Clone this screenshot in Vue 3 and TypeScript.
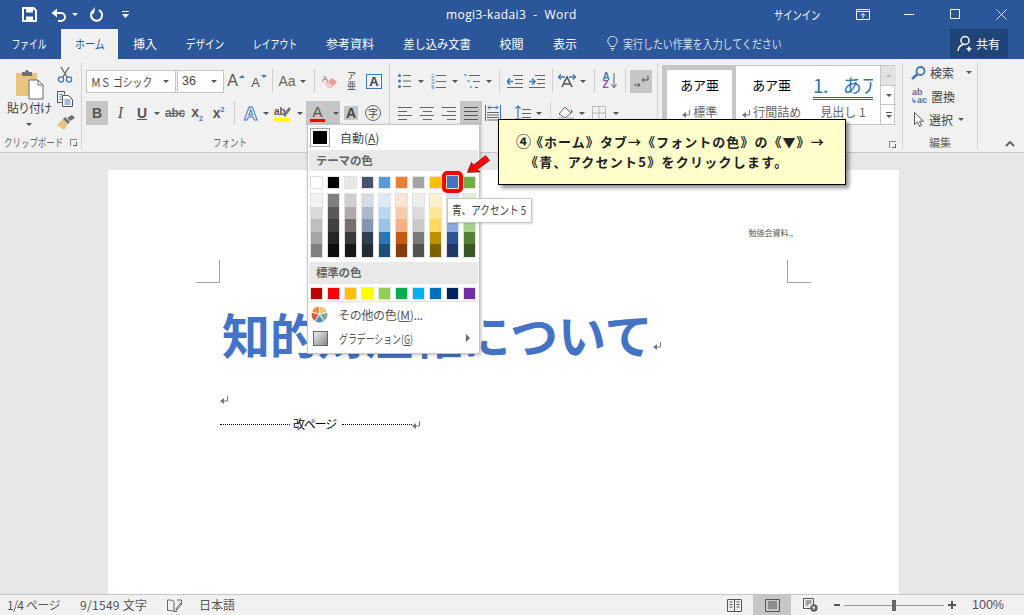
<template>
  <div class="word">
    <header class="titlebar">
      <div class="qat">
        <svg class="q-save" width="15" height="15" viewBox="0 0 15 15"><path d="M1 1h10.5L14 3.5V14H1z" fill="none" stroke="#fff" stroke-width="2"/><path d="M4 1h7v4.5H4zM4 9.5h7V14H4z" fill="#fff"/></svg>
        <svg class="q-undo" width="16" height="14" viewBox="0 0 16 14"><path d="M2.5 5H10a4 4 0 0 1 0 8H7" fill="none" stroke="#fff" stroke-width="2"/><path d="M6 .5v9L.5 5z" fill="#fff"/></svg>
        <span class="caret white q-c1"></span>
        <svg class="q-redo" width="15" height="15" viewBox="0 0 15 15"><path d="M5 3.2a5.6 5.6 0 1 0 5-.1" fill="none" stroke="#fff" stroke-width="2"/><path d="M5.5 0v7H1.5z" fill="#fff" transform="rotate(8 5 3)"/></svg>
        <svg class="q-more" width="7" height="7" viewBox="0 0 7 7"><path d="M0 0h7v1H0zM0 3h7L3.5 7z" fill="#fff"/></svg>
      </div>
      <div class="doc-title">mogi3-kadai3&nbsp; -&nbsp; Word</div>
      <div class="signin"><span>サインイン</span></div>
      <div class="winctl">
        <svg width="14" height="11" viewBox="0 0 14 11"><path d="M.5.5h13v10H.5zM.5 2.5h13M7 9V4.5M5 6.5l2-2 2 2" fill="none" stroke="#fff"/></svg>
        <svg width="11" height="11" viewBox="0 0 11 11"><path d="M0 5.5h10" stroke="#fff"/></svg>
        <svg width="11" height="11" viewBox="0 0 11 11"><path d="M.5.5h9v9h-9z" fill="none" stroke="#fff"/></svg>
        <svg width="11" height="11" viewBox="0 0 11 11"><path d="M.5.5l10 10M10.5.5l-10 10" stroke="#fff"/></svg>
      </div>
    </header>

    <nav class="tabs">
      <div v-for="tab in tabs" :key="tab.label" class="tab" :class="[tab.cls, { active: tab.active }]"><span>{{ tab.label }}</span></div>
      <svg class="bulb" width="11" height="15" viewBox="0 0 11 15"><path d="M3.5 10.5C3 8.500.8 7.500.8 5a4.700 4.700 0 0 1 9.400 0c0 2.500-2.200 3.500-2.700 5.500zM3.700 12.500h3.600M4.500 14.300h2" fill="none" stroke="#dfe6f1"/></svg>
      <div class="tellme"><span>実行したい作業を入力してください</span></div>
      <div class="share">
        <svg width="17" height="17" viewBox="0 0 17 17"><circle cx="8" cy="5.500" r="4" fill="none" stroke="#fff" stroke-width="1.500"/><path d="M1 16c.5-4 3-6 5.500-6.500M12 11.500v5M9.500 14h5" fill="none" stroke="#fff" stroke-width="1.500"/></svg>
        <span>共有</span>
      </div>
    </nav>

    <section class="ribbon">
      <div class="group g-clip">
        <div class="clip-body">
          <div class="paste">
            <svg width="29" height="31" viewBox="0 0 29 31"><path d="M1 4h21v23H1z" fill="#e9c47d"/><path d="M7 3h3a2 2 0 0 1 4 0h3v4H7z" fill="#6f6f6f"/><path d="M14 11h9l5 5v14H14z" fill="#fff" stroke="#6a6a6a"/><path d="M23 11v5h5" fill="none" stroke="#6a6a6a"/></svg>
            <div class="paste-label">貼り付け</div>
            <span class="caret"></span>
          </div>
          <div class="clip-tools">
            <svg width="16" height="16" viewBox="0 0 16 16"><path d="M4 0l6 10M12 0L6 10" stroke="#666" stroke-width="1.300" fill="none"/><circle cx="4" cy="12.500" r="2.600" fill="none" stroke="#3f78b5" stroke-width="1.300"/><circle cx="12" cy="12.500" r="2.600" fill="none" stroke="#3f78b5" stroke-width="1.300"/></svg>
            <svg width="16" height="16" viewBox="0 0 16 16"><path d="M.5.5h7l0 3M.5.5v11h4" fill="none" stroke="#555"/><path d="M5.500 4.500h6l4 4v7h-10z" fill="#fff" stroke="#555"/><path d="M2.500 3.500h3M2.500 6h2M2.500 8.500h2M7.500 9h6M7.500 11h6M7.500 13h6" stroke="#3f78b5"/></svg>
            <svg width="18" height="15" viewBox="0 0 18 15"><path d="M0 10l6-6 5 5-4 6z" fill="#e9c47d"/><path d="M6 4l5 5 2-2-5-5z" fill="#6f6f6f"/><path d="M10 3l5-3 3 3-5 3z" fill="#6f6f6f"/></svg>
          </div>
        </div>
        <div class="g-label clip-label"><span>クリップボード</span><i class="launcher"></i></div>
      </div>

      <div class="group g-font">
        <div class="row">
          <div class="combo w90"><span class="combo-font">ＭＳ ゴシック</span><span class="caret"></span></div>
          <div class="combo w47"><span class="combo-size">36</span><span class="caret"></span></div>
          <div class="t w24"><span class="gl big">A</span><span class="tri-up"></span></div>
          <div class="t w22"><span class="gl small">A</span><span class="tri-dn"></span></div>
          <div class="t w4"><i class="sep"></i></div>
          <div class="t w26"><span class="gl aa">Aa</span></div>
          <div class="t w6"><span class="caret"></span></div>
          <div class="t w6"></div>
          <div class="t w4"><i class="sep"></i></div>
          <div class="t w28">
            <svg width="16" height="15" viewBox="0 0 16 15"><text x="0" y="8" class="svg-a">A</text><path d="M3 10l7-6 5 4-6 6H6z" fill="#ee9a9a"/><path d="M3 10l3 4h3l2-2-4-4z" fill="#f6c9c9"/></svg>
          </div>
          <div class="t w15"><span class="ruby"><b>ア</b><b>亜</b></span></div>
          <div class="t w30"><span class="boxed-a">A</span></div>
        </div>
        <div class="row row2">
          <div class="t w22 on"><b class="gl">B</b></div>
          <div class="t w25"><i class="gl serif">I</i></div>
          <div class="t w18"><u class="gl bold">U</u></div>
          <div class="t w12"><span class="caret"></span></div>
          <div class="t w24"><s class="gl abc">abc</s></div>
          <div class="t w20"><span class="gl bold">x<sub class="blue-sub">2</sub></span></div>
          <div class="t w23"><span class="gl bold">x<sup class="blue-sub">2</sup></span></div>
          <div class="t w8"><i class="sep"></i></div>
          <div class="t w25"><span class="fx-a">A</span></div>
          <div class="t w5"><span class="caret"></span></div>
          <div class="t w29">
            <svg width="17" height="19" viewBox="0 0 17 19"><text x="0" y="11" class="svg-ab">ab</text><path d="M9 11l6-8 2 2-6 8z" fill="#777"/><rect x="0" y="14" width="16" height="4" fill="#ff0"/></svg>
          </div>
          <div class="t w5"><span class="caret"></span></div>
          <div class="t w4"></div>
          <div class="t w34 on color-btn">
            <span class="color-a"><span class="gl col">A</span><i class="red-bar"></i></span>
            <span class="caret"></span>
          </div>
          <div class="t w22"><span class="shade-a">A</span></div>
          <div class="t w22"><span class="circle-ji">字</span></div>
        </div>
        <div class="g-label font-label"><span>フォント</span></div>
      </div>

      <div class="group g-para">
        <div class="row">
          <div class="t w28"><svg width="13" height="14" viewBox="0 0 13 14"><use href="#bul"/></svg></div>
          <div class="t w6"><span class="caret"></span></div>
          <div class="t w28"><svg width="15" height="15" viewBox="0 0 15 15"><path d="M.5 0h3M.5 6h3M.5 12h3M.5 3h3M.5 9h3M.5 14h3" stroke="#3f78b5"/><path d="M5 1.500h10M5 7.500h10M5 13.500h10" stroke="#666"/></svg></div>
          <div class="t w6"><span class="caret"></span></div>
          <div class="t w28"><svg width="16" height="15" viewBox="0 0 16 15"><path d="M0 1h3M3 7h3M6 13h2" stroke="#3f78b5"/><path d="M5 1.500h11M9 7.500h7M11 13.500h3" stroke="#666"/></svg></div>
          <div class="t w6"><span class="caret"></span></div>
          <div class="t w5"></div>
          <div class="t w4"><i class="sep"></i></div>
          <div class="t w28"><svg width="16" height="13" viewBox="0 0 16 13"><path d="M6 .5h10M8 4.500h8M8 8.500h8M0 12.500h16" stroke="#666"/><path d="M0 6.500h6M3 3.500l-3 3 3 3" stroke="#3f78b5" stroke-width="1.600" fill="none"/></svg></div>
          <div class="t w16"><svg width="16" height="13" viewBox="0 0 16 13"><path d="M6 .5h10M8 4.500h8M8 8.500h8M0 12.500h16" stroke="#666"/><path d="M0 6.500h6M3 3.500l3 3-3 3" stroke="#3f78b5" stroke-width="1.600" fill="none"/></svg></div>
          <div class="t w5"></div>
          <div class="t w4"><i class="sep"></i></div>
          <div class="t w26"><svg width="18" height="14" viewBox="0 0 18 14"><path d="M1 3h6M3 .5L.5 3 3 5.500M17 3h-6M15 .5L17.500 3 15 5.500" stroke="#3f78b5" stroke-width="1.300" fill="none"/><path d="M4 13L9 3l5 10M6 10h6" stroke="#555" stroke-width="1.600" fill="none"/></svg></div>
          <div class="t w6"><span class="caret"></span></div>
          <div class="t w6"></div>
          <div class="t w4"><i class="sep"></i></div>
          <div class="t w27"><span class="sort"><b class="s-a">A</b><b class="s-z">Z</b></span><svg width="6" height="16" viewBox="0 0 6 16"><path d="M3 0v14M.5 11L3 15l2.500-4" stroke="#666" fill="none"/></svg></div>
          <div class="t w4"><i class="sep"></i></div>
          <div class="t w3"></div>
          <div class="t w22 on h23"><svg width="15" height="13" viewBox="0 0 15 13"><path d="M14 .5v4.500H8M10 3L8 5l2 2M0 10h6M4 8l2 2-2 2" stroke="#555" fill="none"/></svg></div>
        </div>
        <div class="row row2 para2">
          <div class="t w4"></div>
          <div class="t w22"><svg width="15" height="13" viewBox="0 0 15 13"><path d="M0 .5h14M0 4.500h9M0 8.500h14M0 12.500h9" stroke="#666"/></svg></div>
          <div class="t w22"><svg width="15" height="13" viewBox="0 0 15 13"><path d="M0 .5h14M3 4.500h9M0 8.500h14M3 12.500h9" stroke="#666"/></svg></div>
          <div class="t w22"><svg width="15" height="13" viewBox="0 0 15 13"><path d="M0 .5h14M5 4.500h9M0 8.500h14M5 12.500h9" stroke="#666"/></svg></div>
          <div class="t w22 on"><svg width="15" height="13" viewBox="0 0 15 13"><path d="M0 .5h14M0 4.500h14M0 8.500h14M0 12.500h14" stroke="#555"/></svg></div>
          <div class="t w22"><svg width="16" height="16" viewBox="0 0 16 16"><path d="M.5 0v16M15.500 0v16M3 2.500h10M5 .5L3 2.500l2 2M11 .5l2 2-2 2" stroke="#3f78b5" fill="none"/><path d="M2 7.500h12M2 10h12M2 12.500h12M2 15h12" stroke="#666"/></svg></div>
          <div class="t w6"></div>
          <div class="t w26"><svg width="16" height="17" viewBox="0 0 16 17"><path d="M3 1v15M.5 3.500L3 1l2.500 2.500M.5 13.500L3 16l2.500-2.500" stroke="#3f78b5" fill="none" stroke-width="1.200"/><path d="M7 4.500h9M7 8.500h9M7 12.500h9" stroke="#666"/></svg></div>
          <div class="t w6"><span class="caret"></span></div>
          <div class="t w6"></div>
          <div class="t w4"><i class="sep"></i></div>
          <div class="t w27"><svg width="16" height="16" viewBox="0 0 16 16"><path d="M1 9l6-7 6 6-6 5z" fill="#fff" stroke="#666"/><path d="M13 4c2 2 2 4 1 4s-1-2-1-4z" fill="#3f78b5"/><path d="M0 13h15v3H0z" fill="#fff" stroke="#aaa"/></svg></div>
          <div class="t w6"><span class="caret"></span></div>
          <div class="t w28"><svg width="14" height="14" viewBox="0 0 14 14"><path d="M.5.500h13v13H.5zM.5 7h13M7 .500v13" fill="none" stroke="#888" stroke-dasharray="1 1"/></svg></div>
          <div class="t w6"><span class="caret"></span></div>
        </div>
      </div>

      <div class="group g-styles">
        <div class="gallery">
          <div class="style-item selected">
            <div class="s-sample">あア亜</div>
            <div class="s-name"><svg class="ret-g" width="9" height="9" viewBox="0 0 9 9"><use href="#ret"/></svg> 標準</div>
          </div>
          <div class="style-item">
            <div class="s-sample">あア亜</div>
            <div class="s-name"><svg class="ret-g" width="9" height="9" viewBox="0 0 9 9"><use href="#ret"/></svg> 行間詰め</div>
          </div>
          <div class="style-item heading">
            <div class="s-heading">1.&nbsp;&nbsp;&nbsp;&nbsp;あア</div>
            <div class="s-name">見出し 1</div>
          </div>
          <div class="gallery-scroll">
            <div class="gs-btn disabled"><span class="tri-scroll"></span></div>
            <div class="gs-btn"><span class="caret"></span></div>
            <div class="gs-btn more"><i></i><span class="caret"></span></div>
          </div>
        </div>
        <i class="launcher styles-launch"></i>
      </div>

      <div class="group g-edit">
        <div class="edit-list">
          <div class="edit-item">
            <svg width="15" height="14" viewBox="0 0 15 14"><circle cx="9.500" cy="5" r="4" fill="none" stroke="#3f78b5" stroke-width="1.800"/><path d="M6.500 8L1 13" stroke="#3f78b5" stroke-width="2.400"/></svg>
            <span>検索</span><span class="caret edit-caret"></span>
          </div>
          <div class="edit-item">
            <span class="abac"><b class="ab">ab</b><b class="ac"><i>↳</i>ac</b></span>
            <span>置換</span>
          </div>
          <div class="edit-item">
            <svg class="sel-arrow" width="10" height="15" viewBox="0 0 10 15"><path d="M.5.500v12l3-2.500 2 4.500 2-1-2-4.300H9.500z" fill="#fff" stroke="#555"/></svg>
            <span>選択</span><span class="caret"></span>
          </div>
        </div>
        <div class="g-label">編集</div>
      </div>
      <svg class="ribbon-toggle" width="10" height="6" viewBox="0 0 10 6"><path d="M1 5l4-4 4 4" fill="none" stroke="#666" stroke-width="2"/></svg>
    </section>

    <main class="workspace">
      <article class="page">
        <div class="page-header">勉強会資料.,</div>
        <div class="crops"><i class="crop crop-l"></i><i class="crop crop-r"></i></div>
        <div class="body">
          <h1 class="doc-h1">知的財産権について<svg class="ret-mark h1-ret" width="9" height="9" viewBox="0 0 9 9"><use href="#ret"/></svg></h1>
          <svg class="ret-mark empty-para" width="9" height="9" viewBox="0 0 9 9"><use href="#ret"/></svg>
          <div class="pagebreak"><i></i><span>改ページ</span><i></i><svg class="ret-mark" width="9" height="9" viewBox="0 0 9 9"><use href="#ret"/></svg></div>
        </div>
      </article>
    </main>

    <footer class="status">
      <span class="st-page">1/4 ページ</span>
      <span class="st-words">9/1549 文字</span>
      <svg class="st-book" width="15" height="13" viewBox="0 0 15 13"><path d="M7 2.500C6 1 3 1 .5 1v10.500C3 11.500 6 11.500 7 12.500V2.500zM7 12.500h3M10 1h4.500v5" fill="none" stroke="#666"/><path d="M9 10l4.500-6 1 1-4.500 6H9z" fill="none" stroke="#666"/></svg>
      <span class="st-lang">日本語</span>
      <div class="st-views">
        <div class="view"><svg width="15" height="13" viewBox="0 0 15 13"><path d="M.5.500h14v12H.5zM7.500.500v12M2.500 3h3M2.500 5.500h3M2.500 8h3M9.500 3h3M9.500 5.500h3M9.500 8h3" fill="none" stroke="#555"/></svg></div>
        <div class="view on"><svg width="15" height="13" viewBox="0 0 15 13"><path d="M.5.500h14v12H.5zM3 3h9M3 5h9M3 7h9M3 9h9" fill="none" stroke="#555"/></svg></div>
        <div class="view"><svg width="15" height="14" viewBox="0 0 15 14"><path d="M.5.500h10v10H.5zM2.500 3h6M2.500 5h6M2.500 7h3" fill="none" stroke="#555"/><circle cx="11" cy="10" r="3.700" fill="#666"/><path d="M9 8l3 1-1 3z" fill="#fff"/></svg></div>
      </div>
      <div class="zoom">
        <i class="z-minus"></i>
        <div class="z-track"><i class="z-thumb"></i></div>
        <i class="z-plus"></i>
      </div>
      <span class="st-pct">100%</span>
    </footer>

    <!-- overlays: dropdown, tooltip, callout, pointer -->
    <div class="menu">
      <div class="m-auto"><i class="auto-swatch"></i><span>自動(<u>A</u>)</span></div>
      <div class="m-head">テーマの色</div>
      <div class="swatches top">
        <i v-for="c in themeColors" :key="c" class="sw" :style="{ background: c }"></i>
      </div>
      <div class="shades">
        <div v-for="(col, i) in themeShades" :key="i" class="shade-col">
          <i v-for="c in col" :key="c" :style="{ background: c }"></i>
        </div>
      </div>
      <div class="m-head std">標準の色</div>
      <div class="swatches std-row">
        <i v-for="c in standardColors" :key="c" class="sw" :style="{ background: c }"></i>
      </div>
      <div class="m-div"></div>
      <div class="m-row">
        <svg width="17" height="17" viewBox="0 0 16 16"><path v-for="s in pieSlices" :key="s.d" :d="s.d" :fill="s.color" stroke="#fff" stroke-width=".8"/></svg>
        <span>その他の色(<u>M</u>)...</span>
      </div>
      <div class="m-row grad">
        <i class="grad-box"></i>
        <span class="grad-text">グラデーション(<u>G</u>)</span>
        <i class="m-arrow"></i>
      </div>
    </div>

    <div class="pick"><i></i></div>
    <svg class="pointer" width="25" height="20" viewBox="0 0 28 22"><path d="M1.500 20.500L6 9l2.500 3L22 1.500l4.500 5.500L13 17l3 3z" fill="#f00" stroke="#222" stroke-width=".6"/></svg>
    <div class="tooltip"><span>青、アクセント 5</span></div>

    <div class="callout">
      <p><span class="num">④</span>《ホーム》タブ→《フォントの色》の《▼》→</p>
      <p class="l2">《青、アクセント5》をクリックします。</p>
    </div>

    <svg width="0" height="0" class="defs"><defs>
      <g id="bul"><circle cx="1.500" cy="1.500" r="1.500" fill="#3f78b5"/><circle cx="1.500" cy="7" r="1.500" fill="#3f78b5"/><circle cx="1.500" cy="12.500" r="1.500" fill="#3f78b5"/><path d="M5 1.500h8M5 7h8M5 12.500h8" stroke="#666"/></g>
      <g id="ret"><path d="M7.500 1v5H3" fill="none" stroke="#777"/><path d="M4 3v6L0 6z" fill="#777"/></g>
    </defs></svg>
  </div>
</template>

<script setup lang="ts">
const tabs = [
  { label: 'ファイル', cls: 'tb-file' },
  { label: 'ホーム', cls: 'tb-home', active: true },
  { label: '挿入', cls: 'tb-ins' },
  { label: 'デザイン', cls: 'tb-des' },
  { label: 'レイアウト', cls: 'tb-lay' },
  { label: '参考資料', cls: 'tb-ref' },
  { label: '差し込み文書', cls: 'tb-mail' },
  { label: '校閲', cls: 'tb-rev' },
  { label: '表示', cls: 'tb-view' },
]

const themeColors = ['#ffffff', '#000000', '#e7e6e6', '#44546a', '#5b9bd5', '#ed7d31', '#a5a5a5', '#ffc000', '#4472c4', '#70ad47']

const themeShades = [
  ['#f2f2f2', '#d9d9d9', '#bfbfbf', '#a6a6a6', '#808080'],
  ['#7f7f7f', '#595959', '#404040', '#262626', '#0d0d0d'],
  ['#d0cece', '#afabab', '#767171', '#3b3838', '#181717'],
  ['#d6dce5', '#adb9ca', '#8497b0', '#333f50', '#222a35'],
  ['#deebf7', '#bdd7ee', '#9dc3e6', '#2e75b6', '#1f4e79'],
  ['#fbe5d6', '#f8cbad', '#f4b183', '#c55a11', '#843c0c'],
  ['#ededed', '#dbdbdb', '#c9c9c9', '#7b7b7b', '#525252'],
  ['#fff2cc', '#ffe699', '#ffd966', '#bf9000', '#7f6000'],
  ['#dae3f3', '#b4c7e7', '#8faadc', '#2f5597', '#203864'],
  ['#e2f0d9', '#c5e0b4', '#a9d18e', '#548235', '#385723'],
]

const standardColors = ['#c00000', '#ff0000', '#ffc000', '#ffff00', '#92d050', '#00b050', '#00b0f0', '#0070c0', '#002060', '#7030a0']

// five wedges, clockwise from the top
const pieColors = ['#e9c47d', '#7fa99b', '#5b8fc0', '#d85f3f', '#e89344']
const pieSlices = pieColors.map((color, i) => {
  const a0 = (i * 72 * Math.PI) / 180 - Math.PI / 2
  const a1 = ((i + 1) * 72 * Math.PI) / 180 - Math.PI / 2
  const p = (a: number) => `${(8 + 7.8 * Math.cos(a)).toFixed(2)} ${(8 + 7.8 * Math.sin(a)).toFixed(2)}`
  return { color, d: `M8 8L${p(a0)}A7.8 7.8 0 0 1 ${p(a1)}Z` }
})
</script>

<style>
html,
body {
  margin: 0;
  background: #e6e6e6;
}
</style>

<style scoped>
.word {
  position: relative;
  width: 1024px;
  height: 615px;
  overflow: hidden;
  display: flex;
  flex-direction: column;
  font-family: "Noto Sans CJK JP", "Noto Sans", sans-serif;
  font-size: 12px;
  color: #444;
}

/* title bar */
.titlebar {
  height: 29px;
  flex: none;
  display: flex;
  align-items: center;
  background: #2b579a;
  color: #fff;
}
.qat {
  width: 446px;
  display: flex;
  align-items: center;
  flex: none;
  padding-left: 22px;
  box-sizing: border-box;
}
.q-undo { margin-left: 14px; }
.q-c1 { margin-left: 5px; }
.q-redo { margin-left: 11px; }
.q-more { margin-left: 18px; }
.doc-title {
  width: 328px;
  flex: none;
  font-family: "Open Sans", "Noto Sans", sans-serif;
  font-size: 12px;
  letter-spacing: .4px;
  margin-top: -1px;
}
.signin {
  width: 82px;
  flex: none;
  font-size: 12px;
  margin-top: -1px;
}
.signin span {
  display: inline-block;
  transform: scaleX(.77);
  transform-origin: left center;
}
.winctl {
  display: flex;
  align-items: center;
}
.winctl svg:nth-child(2) { margin-left: 34px; }
.winctl svg:nth-child(3) { margin-left: 35px; }
.winctl svg:nth-child(4) { margin-left: 35px; }

/* tabs */
.tabs {
  height: 30px;
  flex: none;
  display: flex;
  align-items: stretch;
  background: #2b579a;
  color: #fff;
  position: relative;
}
.tab {
  display: flex;
  align-items: center;
  justify-content: center;
  flex: none;
  font-size: 12px;
}
.tab span {
  display: inline-block;
  white-space: nowrap;
  margin-top: -2px;
}
.tab.active {
  background: #f1f1f1;
  color: #2b579a;
}
.tb-file { width: 61px; padding-right: 3px; box-sizing: border-box; }
.tb-file span { transform: scaleX(.72); }
.tb-home { width: 57px; }
.tb-home span { transform: scaleX(.83); }
.tb-ins { width: 54px; }
.tb-des { width: 66px; }
.tb-des span { transform: scaleX(.8); }
.tb-lay { width: 74px; }
.tb-lay span { transform: scaleX(.74); }
.tb-ref { width: 76px; }
.tb-mail { width: 98px; }
.tb-mail span { transform: scaleX(.94); }
.tb-rev { width: 51px; }
.tb-view { width: 56px; }
.bulb {
  align-self: center;
  margin-left: 14px;
  margin-top: -1px;
}
.tellme {
  align-self: center;
  margin-left: 5px;
  margin-top: -2px;
  color: #d6dfee;
  white-space: nowrap;
}
.tellme span {
  display: inline-block;
  transform: scaleX(.83);
  transform-origin: left center;
}
.share {
  position: absolute;
  left: 950px;
  top: 0;
  width: 58px;
  height: 29px;
  box-sizing: border-box;
  padding-left: 7px;
  display: flex;
  align-items: center;
  gap: 2px;
  background: #1f4478;
}

/* ribbon */
.ribbon {
  height: 94px;
  flex: none;
  display: flex;
  box-sizing: border-box;
  background: #f1f1f1;
  border-bottom: 1px solid #c6c6c6;
  padding: 4px 0 3px;
  position: relative;
}
.ribbon-toggle {
  position: absolute;
  left: 1005px;
  top: 82px;
}
.group {
  flex: none;
  box-sizing: border-box;
  display: flex;
  flex-direction: column;
  border-right: 1px solid #d2d2d2;
  position: relative;
  padding-top: 6px;
}
.g-clip { width: 82px; }
.g-font { width: 308px; padding-left: 4px; }
.g-para { width: 268px; }
.g-styles { width: 245px; padding: 2px 0 0 4px; }
.g-edit { width: 75px; padding-top: 0; }
.clip-body {
  display: flex;
  flex: 1;
  margin-top: -4px;
}
.paste {
  width: 54px;
  flex: none;
  display: flex;
  flex-direction: column;
  align-items: center;
  padding-top: 4px;
  padding-left: 4px;
  box-sizing: border-box;
}
.paste-label {
  margin-top: -1px;
  letter-spacing: -1px;
  line-height: 18px;
  white-space: nowrap;
}
.paste .caret { margin-top: 6px; }
.clip-tools {
  display: flex;
  flex-direction: column;
  align-items: flex-start;
  gap: 8px;
  padding: 2px 0 0 3px;
}
.clip-label {
  justify-content: flex-start;
  padding-left: 3px;
}
.clip-label span {
  display: inline-block;
  transform: scaleX(.77);
  transform-origin: left center;
}
.g-label {
  margin-top: auto;
  height: 14px;
  line-height: 14px;
  font-size: 11px;
  color: #666;
  display: flex;
  justify-content: center;
  position: relative;
  white-space: nowrap;
}
.font-label {
  padding-right: 15px;
}
.font-label span {
  display: inline-block;
  transform: scaleX(.77);
}
.launcher {
  position: absolute;
  left: 70px;
  top: 4px;
  width: 7px;
  height: 7px;
  border-left: 1px solid #888;
  border-top: 1px solid #888;
  box-sizing: border-box;
}
.launcher::after {
  content: "";
  position: absolute;
  left: 2px;
  top: 2px;
  width: 4px;
  height: 4px;
  border-right: 1px solid #666;
  border-bottom: 1px solid #666;
  box-sizing: border-box;
}
.styles-launch {
  left: 231px;
  top: 78px;
}
.row {
  display: flex;
  align-items: center;
  height: 24px;
}
.row2 { margin-top: 8px; }
.t {
  flex: none;
  height: 24px;
  display: flex;
  align-items: center;
  justify-content: center;
  position: relative;
}
.h23 { height: 23px; }
.on { background: #c6c6c6; }
.w3 { width: 3px; }
.w4 { width: 4px; }
.w5 { width: 5px; }
.w6 { width: 6px; }
.w8 { width: 8px; }
.w12 { width: 12px; }
.w15 { width: 15px; }
.w16 { width: 16px; }
.w18 { width: 18px; }
.w20 { width: 20px; }
.w22 { width: 22px; }
.w23 { width: 23px; }
.w24 { width: 24px; }
.w25 { width: 25px; }
.w26 { width: 26px; }
.w27 { width: 27px; }
.w28 { width: 28px; }
.w29 { width: 29px; }
.w30 { width: 30px; }
.w34 { width: 34px; }
.w47 { width: 47px; margin-left: 1px; }
.w90 { width: 90px; }
.sep {
  display: block;
  width: 1px;
  height: 24px;
  background: #d2d2d2;
}
.caret {
  display: inline-block;
  width: 0;
  height: 0;
  flex: none;
  border-left: 3px solid transparent;
  border-right: 3px solid transparent;
  border-top: 3px solid #555;
}
.caret.white { border-top-color: #fff; }
.combo {
  height: 23px;
  flex: none;
  box-sizing: border-box;
  display: flex;
  align-items: center;
  justify-content: space-between;
  padding: 0 6px 0 4px;
  background: #fff;
  border: 1px solid #c6c6c6;
  overflow: hidden;
}
.combo-font {
  display: inline-block;
  white-space: nowrap;
  transform: scaleX(.82);
  transform-origin: left center;
  margin-right: -14px;
}
.combo-size {
  font-family: "Liberation Sans", sans-serif;
  font-size: 12.5px;
}
.gl {
  font-family: "Liberation Sans", sans-serif;
  font-size: 14px;
  color: #555;
  line-height: 1;
}
.gl.big { font-size: 16px; }
.gl.small { font-size: 13px; margin-top: 3px; }
.gl.aa { font-size: 14px; color: #666; }
.gl.bold { font-weight: 700; }
.gl.serif { font-family: "Liberation Serif", serif; font-size: 16px; }
.gl.abc { font-size: 12px; font-weight: 700; color: #666; letter-spacing: -.3px; }
.gl.col { font-size: 15px; display: block; text-align: center; }
.blue-sub {
  font-size: 7px;
  color: #3f78b5;
}
.tri-up,
.tri-dn {
  width: 0;
  height: 0;
  border-left: 3px solid transparent;
  border-right: 3px solid transparent;
  margin: -9px 0 0 1px;
}
.tri-up { border-bottom: 3px solid #3f78b5; }
.tri-dn { border-top: 3px solid #3f78b5; }
.svg-a {
  font: 9px "Liberation Sans", sans-serif;
  fill: #666;
}
.svg-ab {
  font: 700 10px "Liberation Sans", sans-serif;
  fill: #555;
}
.ruby {
  display: flex;
  flex-direction: column;
  align-items: center;
  line-height: 10px;
  font-size: 9px;
}
.ruby b { font-weight: 400; }
.boxed-a {
  width: 16px;
  height: 15px;
  box-sizing: border-box;
  border: 1px solid #3f78b5;
  font: 700 13px/13px "Liberation Sans", sans-serif;
  color: #444;
  text-align: center;
}
.fx-a {
  font: 700 19px/1 "Liberation Sans", sans-serif;
  color: #fff;
  -webkit-text-stroke: 1px #3f78b5;
}
.color-btn {
  justify-content: flex-start;
  padding-left: 4px;
  box-sizing: border-box;
  gap: 8px;
}
.color-a {
  width: 15px;
  display: flex;
  flex-direction: column;
  margin-top: -1px;
}
.red-bar {
  display: block;
  height: 3px;
  background: #f00;
  margin-top: 0;
}
.shade-a {
  width: 14px;
  height: 14px;
  background: #c6c6c6;
  font: 700 14px/14px "Liberation Sans", sans-serif;
  color: #444;
  text-align: center;
}
.circle-ji {
  width: 16px;
  height: 16px;
  box-sizing: border-box;
  border: 1px solid #666;
  border-radius: 50%;
  font-size: 10px;
  line-height: 13px;
  text-align: center;
}
.sort {
  display: flex;
  flex-direction: column;
  font: 700 10px/8px "Liberation Sans", sans-serif;
  margin-right: 1px;
}
.s-a { color: #3f78b5; }
.s-z { color: #8a5aa8; }

/* styles gallery */
.gallery {
  width: 233px;
  height: 60px;
  flex: none;
  box-sizing: border-box;
  display: flex;
  background: #fff;
  border: 1px solid #c6c6c6;
}
.style-item {
  width: 71px;
  flex: none;
  box-sizing: border-box;
  display: flex;
  flex-direction: column;
  align-items: center;
  padding-top: 9px;
  overflow: hidden;
}
.style-item.selected {
  width: 73px;
  border: 4px solid #c6c6c6;
  padding-top: 5px;
}
.style-item.heading {
  width: 72px;
  padding-top: 0;
  margin-left: 0;
}
.s-sample {
  font-size: 13px;
  color: #000;
  line-height: 20px;
  white-space: nowrap;
  letter-spacing: -.2px;
}
.s-name {
  font-size: 12px;
  color: #666;
  margin-top: 9px;
  line-height: 16px;
  white-space: nowrap;
}
.ret-g { vertical-align: -1px; }
.s-heading {
  width: 60px;
  height: 25px;
  margin-top: 6px;
  overflow: hidden;
  white-space: nowrap;
  font-size: 19px;
  line-height: 26px;
  color: #2e74b5;
  letter-spacing: -.5px;
  border-bottom: 3px double #44546a;
  box-sizing: content-box;
}
.heading .s-name { margin-top: 4px; }
.gallery-scroll {
  width: 15px;
  flex: none;
  margin-left: 1px;
  display: flex;
  flex-direction: column;
  border-left: 1px solid #c6c6c6;
}
.gs-btn {
  flex: 1;
  display: flex;
  flex-direction: column;
  align-items: center;
  justify-content: center;
  gap: 2px;
  border-bottom: 1px solid #c6c6c6;
}
.gs-btn:last-child { border-bottom: 0; }
.gs-btn.disabled { background: #e2e2e2; }
.gs-btn.more i {
  display: block;
  width: 6px;
  height: 1px;
  background: #555;
}
.tri-scroll {
  width: 0;
  height: 0;
  border-left: 3px solid transparent;
  border-right: 3px solid transparent;
  border-bottom: 3px solid #bbb;
}

/* editing */
.edit-list {
  display: flex;
  flex-direction: column;
  padding-left: 8px;
  gap: 2px;
  margin-top: -1px;
}
.edit-item {
  height: 21.5px;
  display: flex;
  align-items: center;
  font-size: 12px;
  gap: 4px;
}
.edit-caret { margin-left: 8px; }
.edit-item:nth-child(3) { gap: 5px; }
.sel-arrow { margin-left: 3px; }
.abac {
  display: flex;
  flex-direction: column;
  width: 16px;
  font: 700 9px/8px "Liberation Sans", sans-serif;
}
.ab { color: #8a5aa8; padding-left: 1px; }
.ac { color: #3f78b5; white-space: nowrap; }
.ac i { font-style: normal; font-size: 7px; }

/* document */
.workspace {
  flex: 1;
  min-height: 0;
  background: #e6e6e6;
  padding: 17px 125px 0 108px;
}
.page {
  height: 100%;
  box-sizing: border-box;
  background: #fff;
  padding-top: 58px;
}
.page-header {
  height: 10px;
  line-height: 10px;
  padding-right: 106px;
  text-align: right;
  font-size: 8px;
  color: #555;
  white-space: nowrap;
}
.crops {
  display: flex;
  justify-content: space-between;
  padding: 0 88px;
  margin-top: 22px;
}
.crop {
  display: block;
  width: 23px;
  height: 22px;
  border-bottom: 1px solid #a6a6a6;
}
.crop-l { border-right: 1px solid #a6a6a6; }
.crop-r { border-left: 1px solid #a6a6a6; }
.body { padding-left: 112px; }
.doc-h1 {
  display: flex;
  align-items: flex-end;
  margin: 18px 0 0 2px;
  font-size: 48px;
  line-height: 64px;
  font-weight: 700;
  color: #4472c4;
  white-space: nowrap;
}
.ret-mark {
  display: block;
  flex: none;
}
.h1-ret { margin: 0 0 15px 0; }
.empty-para { margin-top: 30px; }
.pagebreak {
  display: flex;
  align-items: center;
  width: 210px;
  margin-top: 10px;
  color: #000;
  line-height: 20px;
}
.pagebreak i {
  display: block;
  width: 70px;
  border-top: 1px dotted #000;
}
.pagebreak span {
  width: 52px;
  padding-left: 3px;
  box-sizing: border-box;
  letter-spacing: -1.2px;
  white-space: nowrap;
}

/* status bar */
.status {
  height: 21px;
  flex: none;
  box-sizing: border-box;
  display: flex;
  align-items: center;
  background: #f1f1f1;
  border-top: 1px solid #c6c6c6;
  padding-left: 7px;
  color: #555;
  position: relative;
  font-size: 12px;
  line-height: 18px;
}
.st-page { width: 73px; flex: none; letter-spacing: -.5px; white-space: nowrap; }
.st-words { width: 87px; flex: none; letter-spacing: .3px; white-space: nowrap; }
.st-book { flex: none; }
.st-lang { margin-left: 17px; }
.st-views {
  display: flex;
  margin-left: auto;
  align-self: stretch;
}
.view {
  width: 38px;
  display: flex;
  align-items: center;
  justify-content: center;
}
.view.on { background: #c6c6c6; }
.zoom {
  display: flex;
  align-items: center;
  margin-left: 5px;
}
.z-minus {
  display: block;
  width: 6px;
  height: 2px;
  background: #555;
}
.z-track {
  width: 100px;
  height: 1px;
  background: #9a9a9a;
  margin: 0 4px;
  position: relative;
}
.z-thumb {
  position: absolute;
  left: 48px;
  top: -5px;
  width: 4px;
  height: 11px;
  background: #666;
}
.z-plus {
  display: block;
  width: 8px;
  height: 8px;
  background:
    linear-gradient(#555, #555) center / 8px 2px no-repeat,
    linear-gradient(#555, #555) center / 2px 8px no-repeat;
}
.st-pct {
  margin: 0 20px 0 16px;
  font-family: "Liberation Sans", sans-serif;
  font-size: 12.5px;
  color: #555;
}

/* colour menu */
.menu {
  position: absolute;
  left: 307px;
  top: 124px;
  width: 173px;
  height: 230px;
  box-sizing: border-box;
  background: #fff;
  border: 1px solid #c6c6c6;
  box-shadow: 1px 1px 3px rgba(0, 0, 0, .25);
  z-index: 3;
}
.m-auto {
  height: 25px;
  display: flex;
  align-items: center;
  padding-left: 2px;
  gap: 10px;
}
.auto-swatch {
  display: block;
  width: 20px;
  height: 19px;
  box-sizing: border-box;
  background: #000;
  border: 3px solid #fff;
  outline: 1px solid #a6a6a6;
  outline-offset: -1px;
}
.m-head {
  height: 21px;
  line-height: 20px;
  background: #e9e9e9;
  padding-left: 7px;
  margin: 0 1px;
  font-weight: 700;
  font-size: 11.5px;
  color: #666;
  letter-spacing: -.2px;
}
.m-head.std {
  height: 22px;
  margin-top: 4px;
  line-height: 21px;
}
.swatches {
  display: flex;
  gap: 4px;
  padding: 4px 0 0 2px;
}
.swatches.top { padding-top: 5px; }
.swatches.std-row { padding-top: 3px; }
.sw {
  display: block;
  width: 13px;
  height: 13px;
  box-sizing: border-box;
  border: 1px solid #e2e2e2;
}
.shades {
  display: flex;
  gap: 4px;
  padding: 4px 0 0 2px;
}
.shade-col {
  width: 13px;
  height: 65px;
  box-sizing: border-box;
  border: 1px solid #e2e2e2;
  display: flex;
  flex-direction: column;
}
.shade-col i {
  display: block;
  flex: 1;
}
.m-div {
  height: 1px;
  background: #e2e2e2;
  margin: 1px 1px 0;
}
.m-row {
  height: 24px;
  display: flex;
  align-items: center;
  padding-left: 3px;
  gap: 10px;
  color: #555;
  letter-spacing: -.3px;
  white-space: nowrap;
}
.m-row.grad {
  padding-left: 5px;
  gap: 11px;
  position: relative;
  letter-spacing: 0;
}
.grad-text {
  display: inline-block;
  transform: scaleX(.74);
  transform-origin: left center;
}
.grad-box {
  display: block;
  width: 15px;
  height: 15px;
  box-sizing: border-box;
  border: 1px solid #666;
  background: linear-gradient(135deg, #eee, #888);
}
.m-arrow {
  position: absolute;
  left: 158px;
  top: 8px;
  width: 0;
  height: 0;
  border-top: 4px solid transparent;
  border-bottom: 4px solid transparent;
  border-left: 4px solid #666;
}
.pick {
  position: absolute;
  left: 442px;
  top: 171px;
  width: 21px;
  height: 22px;
  box-sizing: border-box;
  border: 4px solid #f00;
  border-radius: 5px;
  padding: 1px;
  display: flex;
  background: #ffe1a8;
  z-index: 5;
}
.pick i {
  display: block;
  flex: 1;
  background: #4472c4;
}
.pointer {
  position: absolute;
  left: 466px;
  top: 154px;
  z-index: 6;
}
.tooltip {
  position: absolute;
  left: 447px;
  top: 198px;
  width: 85px;
  height: 25px;
  box-sizing: border-box;
  background: #fff;
  border: 1px solid #c6c6c6;
  box-shadow: 1px 1px 2px rgba(0, 0, 0, .15);
  padding-left: 4px;
  line-height: 22px;
  color: #444;
  white-space: nowrap;
  z-index: 6;
}
.tooltip span {
  display: inline-block;
  transform: scaleX(.8);
  transform-origin: left center;
}
.callout {
  position: absolute;
  left: 498px;
  top: 119px;
  width: 348px;
  height: 66px;
  box-sizing: border-box;
  background: #ffffcc;
  border: 1.5px solid #000;
  box-shadow: 3px 3px 4px rgba(0, 0, 0, .45);
  padding: 11px 0 0 17px;
  z-index: 4;
  font-weight: 700;
  font-size: 13px;
  line-height: 20px;
  letter-spacing: 1.05px;
  color: #222;
  white-space: nowrap;
}
.callout p { margin: 0; }
.callout .num {
  font-size: 15px;
  line-height: 20px;
  letter-spacing: -1px;
}
.callout .l2 {
  padding-left: 9px;
  letter-spacing: 1.25px;
}
.defs { position: absolute; }
</style>
